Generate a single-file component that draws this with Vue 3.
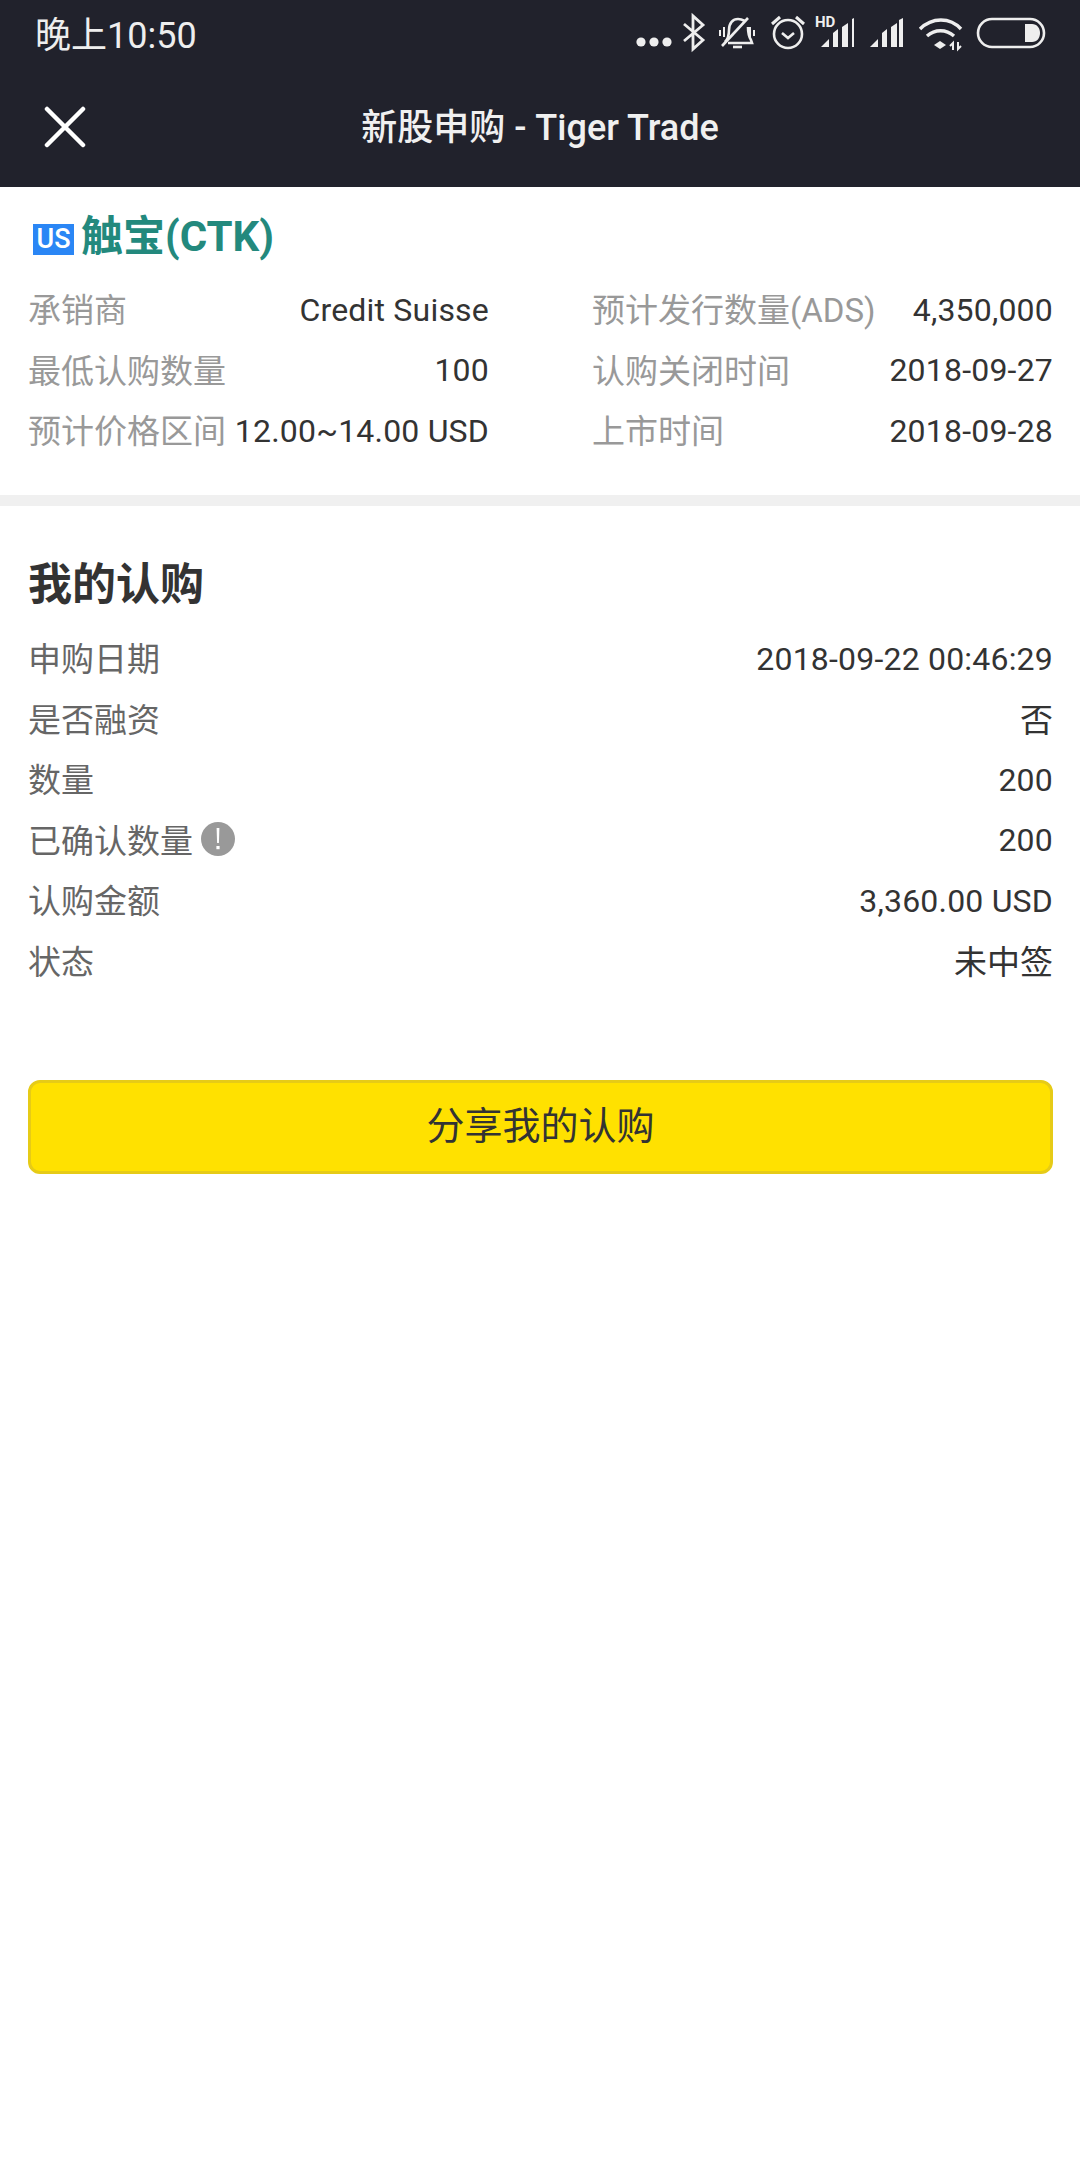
<template>
  <div class="page">
    <div class="statusbar">
      <span class="clock">晚上10:50</span>
      <svg class="status-icons" width="430" height="70" viewBox="630 0 430 70">
        <g fill="#eeeeee">
          <circle cx="641" cy="42" r="4.6" />
          <circle cx="654" cy="42" r="4.6" />
          <circle cx="667" cy="42" r="4.6" />
        </g>
        <path d="M684 24l19 16-10 9V16l10 9-19 16" fill="none" stroke="#eeeeee" stroke-width="2.8" />
        <g fill="none" stroke="#eeeeee" stroke-width="2.6">
          <path d="M725 42c3-3 4-7 4-12 0-7 4-11 9-11 3 0 5 1 7 2M748 27c0 5 1 10 3 13l1 3h-24" />
          <path d="M722 46L748 18" />
          <path d="M733 47h9" />
          <path d="M724 27v10M720 30v6M750 27v10M754 30v6" stroke-width="2" />
          <circle cx="788" cy="34" r="14" />
          <path d="M782 33l6 5 6-5" />
          <path d="M772 24l8-7M804 24l-8-7" stroke-width="3" />
        </g>
        <g fill="#eeeeee">
          <path d="M821 47l8-8v8zM833 47V33l5-4v18zM842 47V27l6-4v24zM852 47V19l2-1v29z" />
          <path d="M870 47l8-8v8zM882 47V33l5-4v18zM891 47V27l6-4v24zM899 47V20l4-2v29z" />
        </g>
        <text x="815" y="27" class="hd">HD</text>
        <g fill="none" stroke="#eeeeee" stroke-width="3.4">
          <path d="M920 29c12-12 30-12 41 0" />
          <path d="M927 36c8-7 19-7 27 0" />
        </g>
        <path d="M934 45l6-4 6 4-6 4z" fill="#eeeeee" />
        <path d="M953 50v-7l-3 3M958 42v7l3-3" fill="none" stroke="#eeeeee" stroke-width="2" />
        <rect x="978" y="19" width="66" height="28" rx="14" fill="none" stroke="#eeeeee" stroke-width="2.6" />
        <path d="M1025 24h7c5 0 8 4 8 9s-3 9-8 9h-7z" fill="#eeeeee" />
      </svg>
    </div>
    <div class="navbar">
      <svg class="close" width="42" height="42" viewBox="0 0 42 42">
        <path d="M3 3l36 36M39 3L3 39" stroke="#ffffff" stroke-width="4.5" stroke-linecap="round" />
      </svg>
      <span class="nav-title">新股申购 - Tiger Trade</span>
    </div>

    <div class="ipo">
      <div class="ipo-name">
        <span class="us-tag">US</span>
        <span class="ipo-title">触宝(CTK)</span>
      </div>
      <div class="ipo-grid">
        <div class="ipo-row" v-for="item in ipoInfo" :key="item.label">
          <span class="ipo-label">{{ item.label }}</span>
          <span class="ipo-value">{{ item.value }}</span>
        </div>
      </div>
    </div>

    <div class="divider"></div>

    <div class="mine">
      <div class="mine-title">我的认购</div>
      <div class="mine-row" v-for="item in myInfo" :key="item.label">
        <span class="mine-label">
          {{ item.label }}
          <svg v-if="item.tip" width="34" height="34" viewBox="0 0 34 34">
            <circle cx="17" cy="17" r="17" fill="#999999" />
            <path d="M15.6 6h2.8l-.5 15h-1.8z" fill="#ffffff" />
            <rect x="15.4" y="24" width="3.2" height="3.2" fill="#ffffff" />
          </svg>
        </span>
        <span class="mine-value" :class="{ cjk: item.cjk }">{{ item.value }}</span>
      </div>
      <div class="share-btn">分享我的认购</div>
    </div>
  </div>
</template>

<script setup>
const ipoInfo = [
  { label: '承销商', value: 'Credit Suisse' },
  { label: '预计发行数量(ADS)', value: '4,350,000' },
  { label: '最低认购数量', value: '100' },
  { label: '认购关闭时间', value: '2018-09-27' },
  { label: '预计价格区间', value: '12.00~14.00 USD' },
  { label: '上市时间', value: '2018-09-28' }
]

const myInfo = [
  { label: '申购日期', value: '2018-09-22 00:46:29' },
  { label: '是否融资', value: '否', cjk: true },
  { label: '数量', value: '200' },
  { label: '已确认数量', value: '200', tip: true },
  { label: '认购金额', value: '3,360.00 USD' },
  { label: '状态', value: '未中签', cjk: true }
]
</script>

<style>
body {
  background: #fff;
}
</style>

<style scoped>
.page {
  width: 1080px;
  min-height: 2160px;
  background: #fff;
  font-family: "Roboto", "Noto Sans CJK SC", sans-serif;
}

.statusbar {
  height: 70px;
  background: #21222c;
  display: flex;
  justify-content: space-between;
}

.clock {
  margin-left: 35px;
  line-height: 72px;
  font-size: 36px;
  color: #eee;
}

.status-icons {
  margin-right: 20px;
}

.hd {
  font-size: 15px;
  font-weight: 700;
  fill: #eee;
  font-family: "Roboto", sans-serif;
}

.navbar {
  height: 117px;
  background: #21222c;
  position: relative;
  display: flex;
  align-items: center;
  justify-content: center;
  padding-bottom: 9px;
  box-sizing: border-box;
}

.close {
  position: absolute;
  left: 44px;
  top: 36px;
}

.nav-title {
  font-size: 36px;
  font-weight: 500;
  color: #f0f0f0;
}

.ipo {
  height: 308px;
  box-sizing: border-box;
  padding: 26px 27px 0 28px;
}

.ipo-name {
  display: flex;
  align-items: center;
  height: 48px;
}

.us-tag {
  width: 41px;
  height: 31px;
  margin: 4px 7px 0 5px;
  background: #2a86f5;
  color: #fff;
  font-size: 27px;
  font-weight: 500;
  line-height: 31px;
  text-align: center;
}

.ipo-title {
  font-size: 42px;
  font-weight: 700;
  color: #23897d;
  line-height: 48px;
}

.ipo-grid {
  display: grid;
  grid-template-columns: 461px 461px;
  column-gap: 103px;
  margin-top: 17px;
}

.ipo-row {
  height: 60.5px;
  display: flex;
  justify-content: space-between;
  align-items: center;
  font-size: 33px;
}

.ipo-label {
  color: #999;
}

.ipo-value {
  color: #333;
  font-size: 32px;
  letter-spacing: 0.2px;
  padding-top: 3px;
}

.divider {
  height: 11px;
  background: #f0f0f0;
}

.mine {
  padding: 0 27px 0 28px;
}

.mine-title {
  height: 121px;
  padding-top: 54px;
  box-sizing: border-box;
  font-size: 44px;
  font-weight: 700;
  line-height: 50px;
  color: #333;
}

.mine-row {
  height: 60.5px;
  display: flex;
  justify-content: space-between;
  align-items: center;
  font-size: 33px;
}

.mine-label {
  color: #666;
  display: flex;
  align-items: center;
  gap: 8px;
}

.mine-value {
  color: #333;
  font-size: 32px;
  letter-spacing: 0.2px;
  padding-top: 3px;
}

.mine-value.cjk {
  font-size: 33px;
  letter-spacing: 0;
  padding-top: 0;
}

.share-btn {
  margin-top: 90px;
  height: 94px;
  box-sizing: border-box;
  border: 3px solid #e6cb17;
  border-radius: 12px;
  background: #ffe100;
  color: #333;
  font-size: 38px;
  line-height: 86px;
  text-align: center;
}
</style>
